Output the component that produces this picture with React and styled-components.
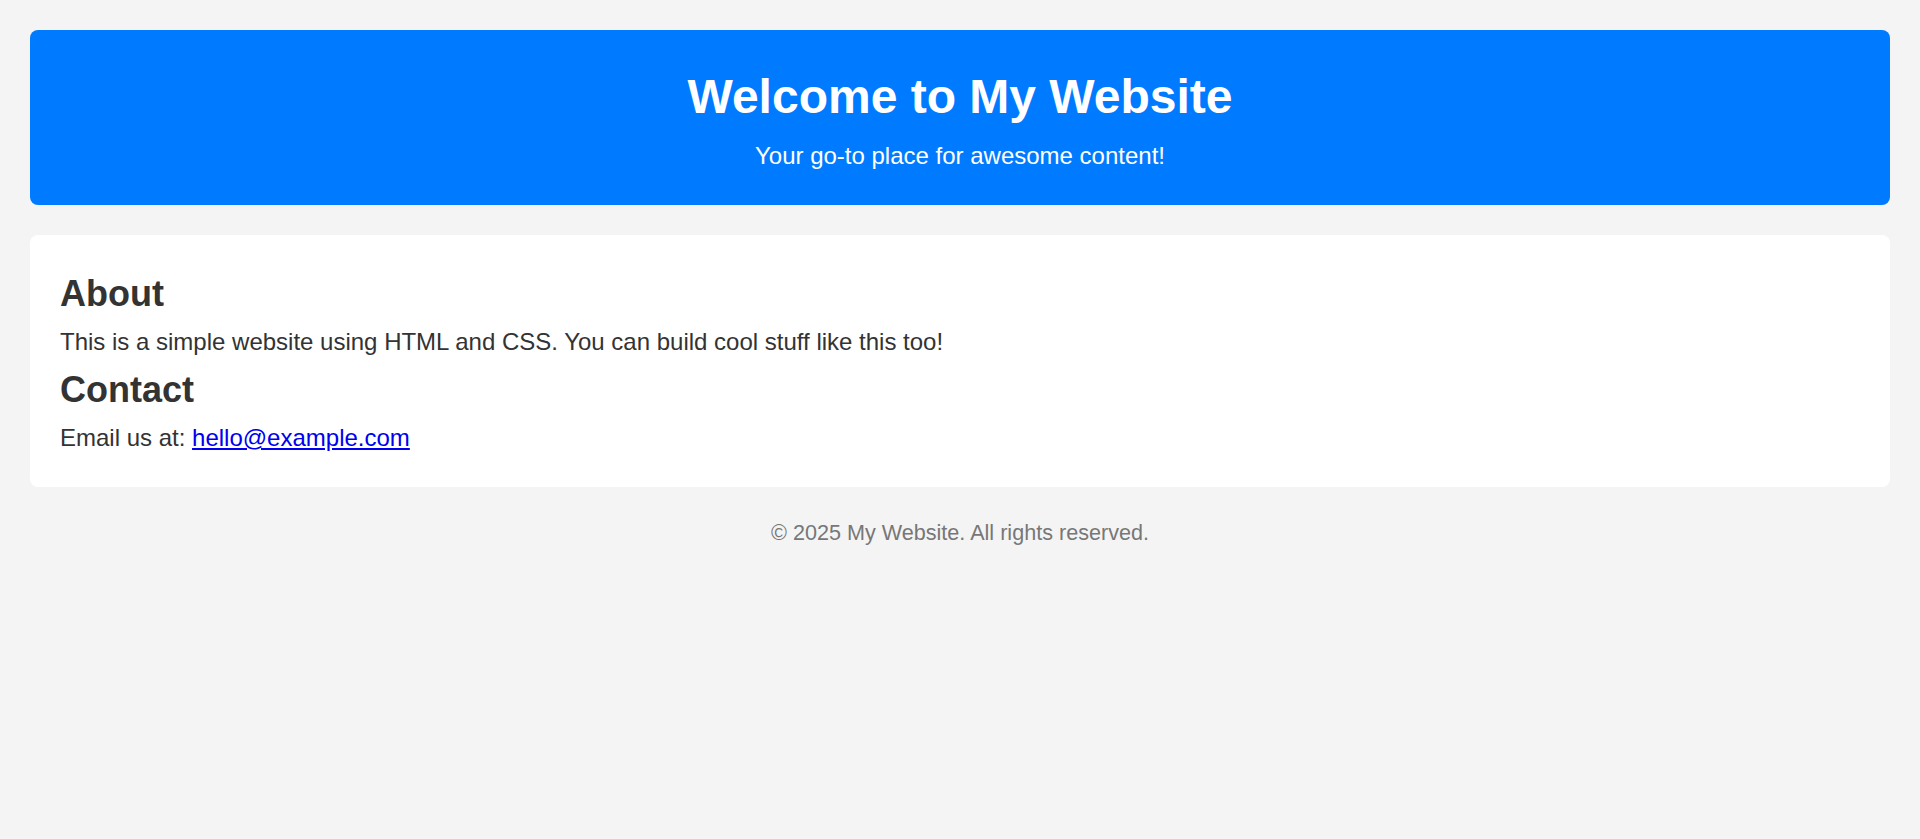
import React from 'react';
import styled, { createGlobalStyle } from 'styled-components';

const GlobalStyle = createGlobalStyle`
  html, body {
    margin: 0;
    padding: 0;
    background-color: #f4f4f4;
  }

  body {
    font-family: "Liberation Sans", Arial, Helvetica, sans-serif;
    font-size: 24px;
    color: #333;
  }
`;

const Page = styled.div`
  padding: 30px;
  display: flex;
  flex-direction: column;
`;

const Header = styled.header`
  background-color: #007bff;
  color: #fff;
  text-align: center;
  border-radius: 8px;
  padding: 39px 30px 35px;
`;

const Title = styled.h1`
  margin: 0;
  font-size: 48px;
  font-weight: bold;
`;

const Tagline = styled.p`
  margin: 18px 0 0;
  font-size: 24px;
`;

const Main = styled.main`
  background-color: #fff;
  border-radius: 8px;
  margin-top: 30px;
  padding: 38px 30px 35px;
`;

const SectionTitle = styled.h2`
  margin: 0 0 13px;
  font-size: 36px;
  font-weight: bold;
  color: #333;
`;

const Text = styled.p`
  margin: 0 0 13px;
  font-size: 24px;

  &:last-child {
    margin-bottom: 0;
  }

  a {
    color: #0000ee;
  }
`;

const Footer = styled.footer`
  margin-top: 33px;
  text-align: center;
  font-size: 21.6px;
  color: #777;
`;

export default function App() {
  return (
    <>
      <GlobalStyle />
      <Page>
        <Header>
          <Title>Welcome to My Website</Title>
          <Tagline>Your go-to place for awesome content!</Tagline>
        </Header>

        <Main>
          <SectionTitle>About</SectionTitle>
          <Text>This is a simple website using HTML and CSS. You can build cool stuff like this too!</Text>
          <SectionTitle>Contact</SectionTitle>
          <Text>
            Email us at: <a href="mailto:hello@example.com">hello@example.com</a>
          </Text>
        </Main>

        <Footer>© 2025 My Website. All rights reserved.</Footer>
      </Page>
    </>
  );
}
